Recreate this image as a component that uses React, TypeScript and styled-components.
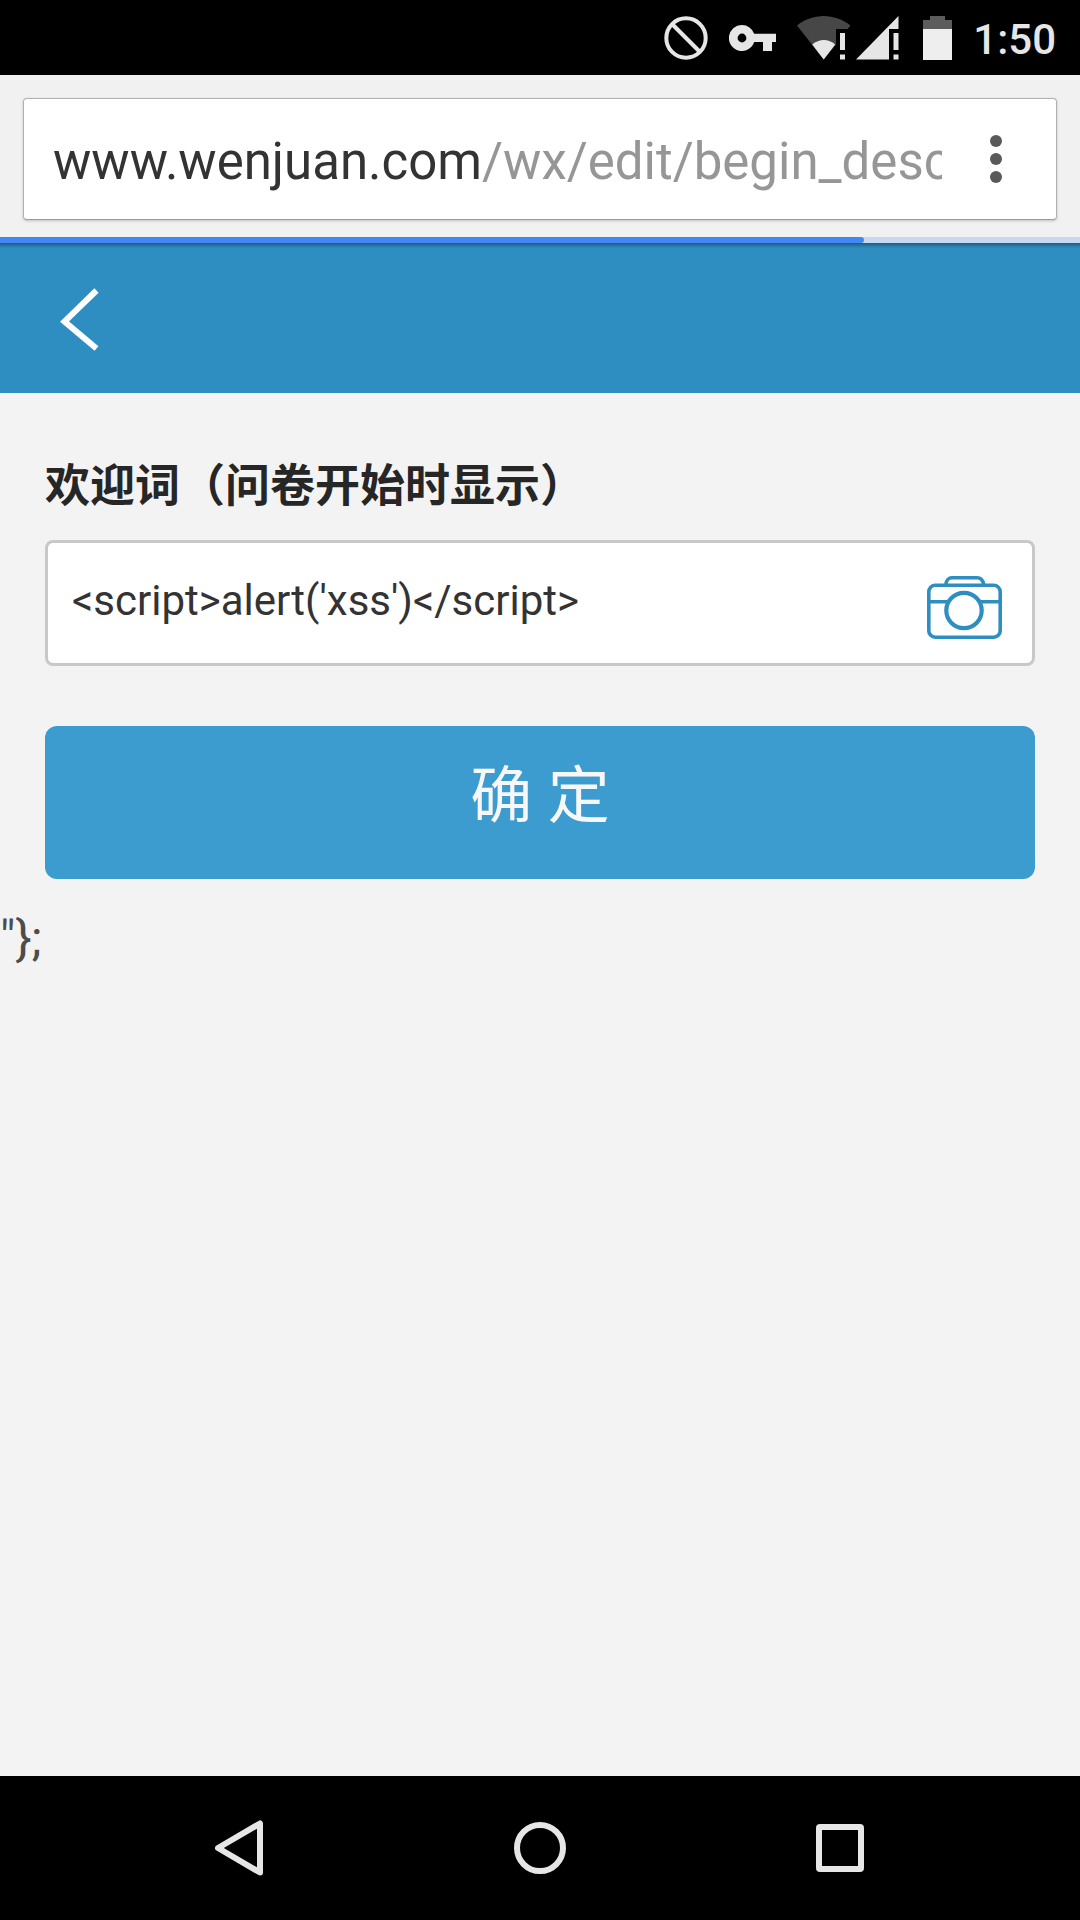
import React from "react";
import styled, { createGlobalStyle } from "styled-components";

const GlobalStyle = createGlobalStyle`
  *, *::before, *::after { box-sizing: border-box; }
  body {
    margin: 0;
    background: #f3f3f3;
    color: #4c4c4c;
    font-family: Roboto, "Noto Sans CJK SC", sans-serif;
  }
`;

const Screen = styled.div`
  display: flex;
  flex-direction: column;
  min-height: 100vh;
`;

const StatusBar = styled.div`
  display: flex;
  align-items: center;
  justify-content: flex-end;
  height: 75px;
  padding: 0 24px;
  background: #000;
  color: #e6e6e6;
`;

const StatusIcon = styled.svg<{ $gap: number }>`
  display: block;
  flex: none;
  margin-right: ${(p) => p.$gap}px;
`;

const Clock = styled.time`
  font-size: 42px;
  font-weight: 500;
  line-height: 48px;
  padding-top: 4px;
`;

const BrowserBar = styled.header`
  padding: 23px 23px 17px;
  background: #f1f1f1;
`;

const Omnibox = styled.div`
  display: flex;
  align-items: center;
  height: 122px;
  padding: 0 40px 0 29px;
  border: 1px solid #b2b2b2;
  border-bottom-color: #9c9c9c;
  border-radius: 4px;
  background: #fff;
  box-shadow: 0 1px 3px rgba(0, 0, 0, 0.2);
`;

const Address = styled.div`
  flex: 1;
  min-width: 0;
  margin-right: 34px;
  padding-top: 6px;
  overflow: hidden;
  white-space: nowrap;
  font-size: 51px;
  line-height: 60px;
  color: #969696;
  outline: none;
`;

const Host = styled.span`
  color: #333;
`;

const IconButton = styled.button`
  display: flex;
  flex: none;
  align-items: center;
  justify-content: center;
  padding: 0;
  border: 0;
  background: none;
  cursor: pointer;
`;

const Progress = styled.div`
  height: 6px;
  background: #c8d8f3;
`;

const ProgressFill = styled.div`
  width: 80%;
  height: 100%;
  border-radius: 0 3px 3px 0;
  background: #4286f5;
`;

const PageHeader = styled.nav`
  display: flex;
  align-items: center;
  height: 150px;
  padding: 3px 60px 0;
  background: linear-gradient(rgba(0, 0, 0, 0.35), rgba(0, 0, 0, 0) 5px), #2e8dc1;
`;

const Form = styled.form`
  display: flex;
  flex-direction: column;
  padding: 61px 45px 0;
`;

const Label = styled.label`
  margin-bottom: 20px;
  font-size: 45px;
  font-weight: 700;
  line-height: 66px;
  color: #262626;
`;

const Field = styled.div`
  display: flex;
  align-items: center;
  height: 126px;
  padding: 0 30px 0 24px;
  border: 3px solid #c8c8c8;
  border-radius: 8px;
  background: #fff;
`;

const TextInput = styled.input`
  flex: 1;
  min-width: 0;
  padding: 0 0 4px;
  border: 0;
  outline: 0;
  background: none;
  font: inherit;
  font-size: 42px;
  line-height: 60px;
  color: #333;
`;

const CameraButton = styled(IconButton)`
  padding-top: 9px;
`;

const Submit = styled.button`
  height: 153px;
  margin-top: 60px;
  padding: 0 0 24px;
  border: 0;
  border-radius: 12px;
  background: #3c9bcf;
  color: #f7f7f7;
  font: inherit;
  font-size: 62px;
  cursor: pointer;
`;

const Stray = styled.p`
  flex: 1;
  margin: 0;
  padding-top: 30px;
  font-size: 48px;
  line-height: 60px;
`;

const NavBar = styled.nav`
  display: flex;
  justify-content: center;
  gap: 60px;
  height: 144px;
  background: #000;
`;

const NavButton = styled(IconButton)`
  width: 240px;
`;

export default function App() {
  return (
    <>
      <GlobalStyle />
      <Screen>
        <StatusBar>
          <StatusIcon $gap={21} width="44" height="44" viewBox="0 0 44 44" fill="none" stroke="#e6e6e6" strokeWidth="4">
            <circle cx="22" cy="22" r="19.7" />
            <path d="M8 8 36 36" />
          </StatusIcon>
          <StatusIcon $gap={21} width="47" height="26" viewBox="0 0 47 26" fill="#e6e6e6">
            <path fillRule="evenodd" d="M13 0a13 13 0 0 1 12.2 8.7H47v8.4h-4V26h-9v-8.900h-8.800A13 13 0 1 1 13 0Zm0 8.600a4.400 4.400 0 1 0 0 8.800 4.400 4.400 0 0 0 0-8.800Z" />
          </StatusIcon>
          <StatusIcon $gap={5} width="54" height="44" viewBox="0 0 54 44">
            <path fill="#474747" d="M0 9.500C7.500 3.500 17 0 26.700 0s19.200 3.500 26.700 9.500L50.700 13H39v15.500L26.700 43.500Z" />
            <path fill="#e6e6e6" d="M15.200 28.500c7-6 16.500-6 23 0L26.700 43.500Z" />
            <path fill="#e6e6e6" d="M43 17h5v17h-5zM43 38.500h5v5h-5z" />
          </StatusIcon>
          <StatusIcon $gap={24} width="43" height="44" viewBox="0 0 43 44" fill="#e6e6e6">
            <path d="M0 43.500 42.500 0v13H33v30.500Z" />
            <path d="M37.500 17h5v17h-5zM37.500 38.500h5v5h-5z" />
          </StatusIcon>
          <StatusIcon $gap={21} width="29" height="44" viewBox="0 0 29 44">
            <path fill="#5c5c5c" d="M7 0h15v4h7v10H0V4h7Z" />
            <path fill="#eee" d="M0 13h29v31H0Z" />
          </StatusIcon>
          <Clock>1:50</Clock>
        </StatusBar>

        <BrowserBar>
          <Omnibox>
            <Address role="textbox" aria-label="Address" contentEditable suppressContentEditableWarning spellCheck={false}>
              <Host>www.wenjuan.com</Host>/wx/edit/begin_desc
            </Address>
            <IconButton type="button" aria-label="Menu">
              <svg width="40" height="48" viewBox="0 0 40 48" fill="#5a5a5a">
                <circle cx="20" cy="6" r="6" />
                <circle cx="20" cy="24" r="6" />
                <circle cx="20" cy="42" r="6" />
              </svg>
            </IconButton>
          </Omnibox>
        </BrowserBar>
        <Progress role="progressbar" aria-label="Loading" aria-valuenow={80}>
          <ProgressFill />
        </Progress>

        <PageHeader>
          <IconButton type="button" aria-label="Back">
            <svg width="40" height="64" viewBox="0 0 40 64" fill="none" stroke="#fff" strokeWidth="6">
              <path d="M36.500 2.500 4.500 33.500 36.500 60.500" />
            </svg>
          </IconButton>
        </PageHeader>

        <Form onSubmit={(e) => e.preventDefault()}>
          <Label htmlFor="welcome">欢迎词（问卷开始时显示）</Label>
          <Field>
            <TextInput id="welcome" type="text" spellCheck={false} defaultValue="<script>alert('xss')</script>" />
            <CameraButton type="button" aria-label="添加图片">
              <svg width="75" height="63" viewBox="0 0 75 63" fill="none" stroke="#2e8dc1" strokeWidth="3.600">
                <rect x="1.800" y="9.300" width="71.400" height="51.900" rx="6.500" />
                <path d="M18.800 8.500c.4-4 2.800-6.700 6.200-6.700h25c3.400 0 6 2.700 6.700 6.700" />
                <path d="M2 25.800h18.500M54 25.800h19" />
                <circle cx="37" cy="34.500" r="17.700" strokeWidth="4.200" />
              </svg>
            </CameraButton>
          </Field>
          <Submit type="submit">确 定</Submit>
        </Form>
        <Stray>{'"};'}</Stray>

        <NavBar>
          <NavButton type="button" aria-label="Back">
            <svg width="50" height="56" viewBox="0 0 50 56" fill="none" stroke="#e6e6e6" strokeWidth="6" strokeLinejoin="round">
              <path d="M45 3.500v49L3 28Z" />
            </svg>
          </NavButton>
          <NavButton type="button" aria-label="Home">
            <svg width="52" height="52" viewBox="0 0 52 52" fill="none" stroke="#e6e6e6" strokeWidth="6">
              <circle cx="26" cy="26" r="23" />
            </svg>
          </NavButton>
          <NavButton type="button" aria-label="Overview">
            <svg width="48" height="48" viewBox="0 0 48 48" fill="none" stroke="#e6e6e6" strokeWidth="6">
              <rect x="3" y="3" width="42" height="42" rx="1" />
            </svg>
          </NavButton>
        </NavBar>
      </Screen>
    </>
  );
}
